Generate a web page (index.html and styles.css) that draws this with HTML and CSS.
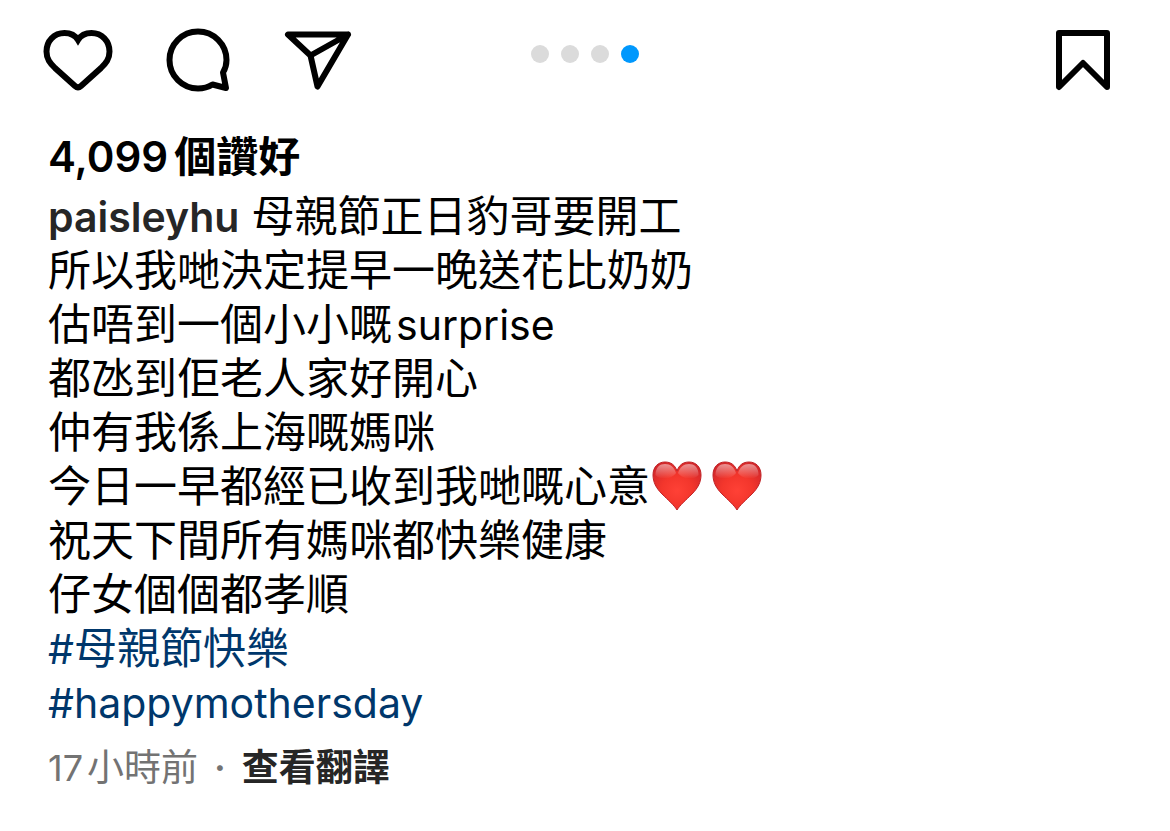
FILE: index.html
```html
<!DOCTYPE html>
<html lang="zh-Hant">
<head>
<meta charset="utf-8">
<meta name="viewport" content="width=device-width, initial-scale=1">
<title>paisleyhu</title>
<link rel="stylesheet" href="styles.css">
</head>
<body>
<svg class="defs" aria-hidden="true">
  <defs>
    <radialGradient id="heart-fill" cx="0.5" cy="0.6" r="0.65">
      <stop offset="0" stop-color="#ff4136"/>
      <stop offset="0.5" stop-color="#f3362c"/>
      <stop offset="1" stop-color="#d2272a"/>
    </radialGradient>
    <linearGradient id="heart-shine" x1="0" y1="0" x2="0" y2="1">
      <stop offset="0" stop-color="#ffffff" stop-opacity="0.5"/>
      <stop offset="1" stop-color="#ffffff" stop-opacity="0"/>
    </linearGradient>
    <symbol id="red-heart" viewBox="0 0 50 50">
      <path d="M25 49C22 44 16 39 10 33C4 27 1 21 1 14C1 6 6 1 13 1C19 1 23 4 25 10C27 4 31 1 37 1C44 1 49 6 49 14C49 21 46 27 40 33C34 39 28 44 25 49Z" fill="url(#heart-fill)" stroke="#c12226" stroke-width="1"/>
      <path d="M3.500 14C3.500 6 8 3 13 3C18.500 3 22 6 24 12C20 18 9 20 3.500 14Z" fill="url(#heart-shine)"/>
      <path d="M46.500 14C46.500 6 42 3 37 3C31.500 3 28 6 26 12C30 18 41 20 46.500 14Z" fill="url(#heart-shine)"/>
    </symbol>
  </defs>
</svg>
<article class="post">
  <div class="toolbar">
    <div class="actions">
      <button class="icon-button" type="button" aria-label="讚好">
        <svg class="icon" viewBox="0 0 72 66" width="72" height="66"><path d="M36 13C39 8 44 6 49.500 6C60 6 67.500 14 67.500 24.500C67.500 32 64 36 59 41L39 59C37 60.800 35 60.800 33 59L13 41C8 36 4.500 32 4.500 24.500C4.500 14 12 6 22.500 6C28 6 33 8 36 13Z" stroke-linejoin="miter"/></svg>
      </button>
      <button class="icon-button" type="button" aria-label="留言">
        <svg class="icon" viewBox="0 0 72 66" width="72" height="66"><path d="M61 45.500C63.500 41.500 64.500 37.500 64.500 33A28.500 28.500 0 1 0 36 61.500C42 61.500 46.500 60 50.500 57.500L64 61Z"/></svg>
      </button>
      <button class="icon-button" type="button" aria-label="分享">
        <svg class="icon" viewBox="0 0 72 66" width="72" height="66"><path d="M6 7.500H66L35.500 59.500L28.500 28.500ZM28.500 28.500L66 7.500"/></svg>
      </button>
    </div>
    <div class="dots" role="img" aria-label="4 / 4">
      <span class="dot"></span><span class="dot"></span><span class="dot"></span><span class="dot dot-active"></span>
    </div>
    <button class="icon-button save" type="button" aria-label="儲存">
      <svg class="icon" viewBox="0 0 60 66" width="60" height="66"><path d="M6 6H54V60L30 36L6 60Z"/></svg>
    </button>
  </div>
  <div class="content">
    <p class="likes"><span>4,099</span><span class="after-latin">個讚好</span></p>
    <p class="caption">
      <a class="user latin" href="#">paisleyhu</a> 母親節正日豹哥要開工<br>
      所以我哋決定提早一晚送花比奶奶<br>
      估唔到一個小小嘅<span class="latin word">surprise</span><br>
      都氹到佢老人家好開心<br>
      仲有我係上海嘅媽咪<br>
      今日一早都經已收到我哋嘅心意<span class="hearts"><svg class="heart" role="img" aria-label="紅心"><use href="#red-heart"/></svg><svg class="heart" role="img" aria-label="紅心"><use href="#red-heart"/></svg></span><br>
      祝天下間所有媽咪都快樂健康<br>
      仔女個個都孝順<br>
      <a class="tag" href="#"><span class="latin">#</span>母親節快樂</a><br>
      <a class="tag latin" href="#">#happymothersday</a>
    </p>
    <div class="meta">
      <time><span class="number">17</span><span class="after-number">小時前</span></time>
      <span class="separator">·</span>
      <button class="translate" type="button">查看翻譯</button>
    </div>
  </div>
</article>
</body>
</html>
```
FILE: styles.css
```css
* {
  box-sizing: border-box;
}

body {
  margin: 0;
  background: #fff;
  color: #000;
  font-family: Inter, "Noto Sans CJK TC", sans-serif;
}

p {
  margin: 0;
}

button {
  padding: 0;
  border: 0;
  background: none;
  font: inherit;
  cursor: pointer;
}

a {
  color: inherit;
  text-decoration: none;
}

.defs {
  position: absolute;
  width: 0;
  height: 0;
}

.toolbar {
  display: grid;
  grid-template-columns: 1fr auto 1fr;
  align-items: start;
  padding: 27px 42px 0;
}

.actions {
  display: flex;
  gap: 48px;
}

.icon-button {
  display: block;
}

.save {
  justify-self: end;
  margin-right: 15px;
}

.icon {
  display: block;
  fill: none;
  stroke: #000;
  stroke-width: 6;
  stroke-linejoin: round;
  stroke-linecap: round;
}

.dots {
  display: flex;
  gap: 12px;
  padding-top: 18px;
}

.dot {
  width: 18px;
  height: 18px;
  border-radius: 50%;
  background: #dbdbdb;
}

.dot-active {
  background: #0098fd;
}

.content {
  padding: 37px 48px 24px;
}

.likes {
  font-size: 42px;
  font-weight: 600;
  line-height: 54px;
}

.after-latin {
  margin-left: 6px;
}

.caption {
  margin-top: 5px;
  font-size: 43px;
  line-height: 54px;
}

.latin {
  font-size: 41px;
  line-height: 1;
}

.user {
  color: #262626;
  font-weight: 600;
}

.word {
  margin-left: 4px;
}

.hearts {
  display: inline-flex;
  align-items: center;
  gap: 10px;
  height: 54px;
  margin-left: 2px;
  vertical-align: top;
}

.heart {
  width: 50px;
  height: 50px;
}

.tag {
  color: #00376b;
}

.meta {
  display: flex;
  align-items: center;
  gap: 16px;
  margin-top: 12px;
  color: #737373;
  font-size: 37px;
  line-height: 54px;
}

.number {
  font-size: 36px;
  line-height: 1;
}

.separator {
  font-weight: 600;
}

.after-number {
  margin-left: 4px;
}

.translate {
  color: #262626;
  font-weight: 600;
}
```
